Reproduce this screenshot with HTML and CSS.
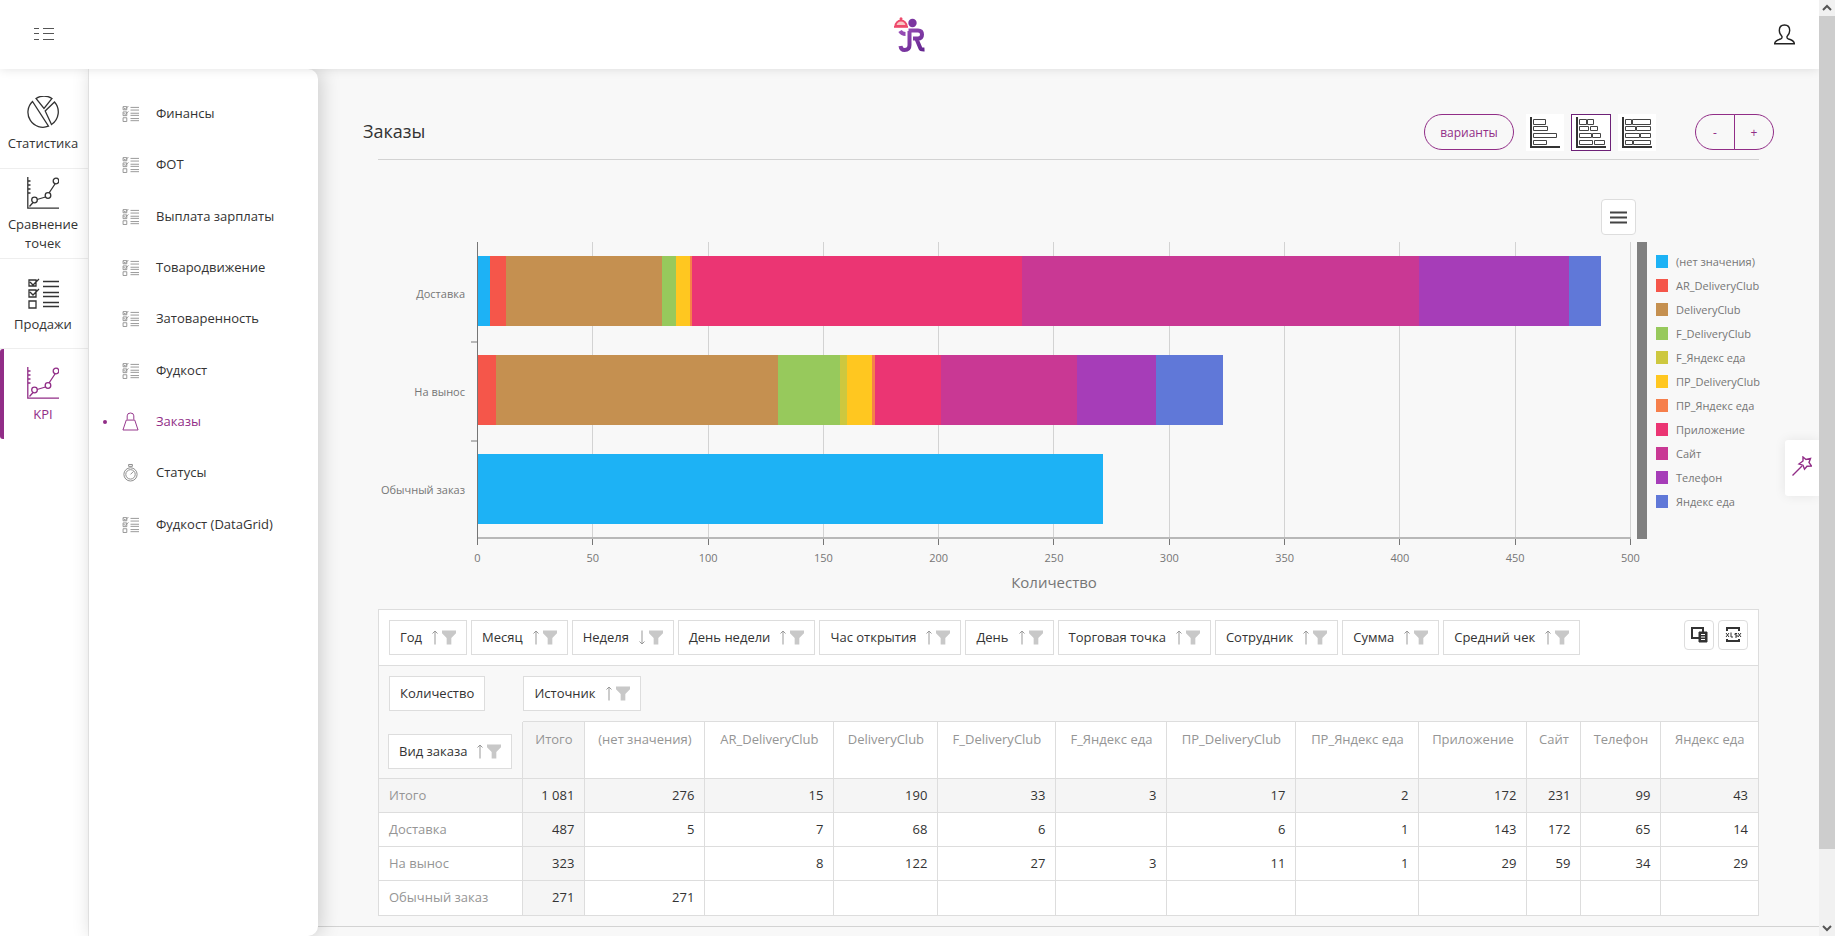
FILE: index.html
```html
<!DOCTYPE html>
<html lang="ru">
<head>
<meta charset="utf-8">
<title>Заказы</title>
<link rel="stylesheet" href="styles.css">
</head>
<body>
<svg class="sprite" aria-hidden="true">
  <symbol id="i-list" viewBox="0 0 32 32"><path d="M2 3h7v6H2zM2 13h7v7H2zM2 24h7v7H2zM3 5l3 3 6-6M3 15l3 3 6-6M16 4.500h16M16 9.500h16M16 15.500h16M16 19.500h16M16 25.500h16M16 29.500h16"/></symbol>
  <symbol id="i-trend" viewBox="0 0 32 32"><path d="M.8 0v31.200H32M1 4h2.500M1 8h2.500M1 12h2.500M1 16h2.500M2.500 29.500l3.500-4M10 22.500l8.500-2.500M22 16l6-9"/><circle cx="7.500" cy="23" r="2.800"/><circle cx="21" cy="18.500" r="2.800"/><circle cx="29" cy="4" r="2.800"/></symbol>
  <symbol id="i-pie" viewBox="0 0 32 32"><path d="M9 2.500a15 15 0 0 1 16 0L17 12.500zM5.500 5.500A15 15 0 0 0 21.500 30.200zM27.500 6A15 15 0 0 1 24.500 28.500L18.200 15z"/></symbol>
  <symbol id="i-weight" viewBox="0 0 18 20"><path d="M5.500 8V4Q5.500 1 9 1t3.500 3v4M4.500 8.500h9L17 19H1z"/></symbol>
  <symbol id="i-watch" viewBox="0 0 18 20"><circle cx="9" cy="12" r="7"/><circle cx="9" cy="12" r="5"/><path d="M9 12l3-3M7 1.500h4v2H7z"/></symbol>
  <symbol id="i-up" viewBox="0 0 6 15"><path d="M3 14.500V1M.5 3.500L3 1l2.500 2.500"/></symbol>
  <symbol id="i-down" viewBox="0 0 6 15"><path d="M3 .5V14M.5 11.500L3 14l2.500-2.500"/></symbol>
  <symbol id="i-funnel" viewBox="0 0 15 15"><path d="M0 0h15v3L10 8v7H5V8L0 3z"/></symbol>
</svg>

<div class="app">
  <header class="top">
    <button class="plain" aria-label="Меню"><svg class="burger" viewBox="0 0 20 13"><path d="M0 .5h5M9 .5h11M0 5.500h5M9 5.500h11M0 11.500h5M9 11.500h11"/></svg></button>
    <a class="logo" href="#" aria-label="Главная"><svg viewBox="0 0 32 36">
      <defs><linearGradient id="lg" x1="0" y1="0" x2="1" y2="1"><stop offset="0" stop-color="#9a4fb8"/><stop offset="1" stop-color="#63258f"/></linearGradient></defs>
      <path d="M1.500 9a5.500 5.500 0 0 1 11 0z" fill="#f9c6c4" stroke="#ee4a6c" stroke-width="2"/><path d="M0 9.800h14" stroke="#ee4a6c" stroke-width="2"/><circle cx="7" cy="1.800" r="1.500" fill="#ee4a6c"/>
      <circle cx="18.500" cy="6" r="4.200" fill="#7b35a0"/>
      <path d="M6 14q2 3 5.500 3M14.500 13.500h9.500q4 0 4 4t-4 4h-5M15.500 14v14q0 5-5 5Q7 33 6.500 29M22.500 22l4 9.500q.5 1.200 4 1" fill="none" stroke="url(#lg)" stroke-width="4"/>
    </svg></a>
    <button class="plain" aria-label="Профиль"><svg class="user" viewBox="0 0 21 21"><path d="M10.500 1C7 1 5.300 3 5.300 6.500q0 3.500 2.700 6v1q0 1-1.500 1.500-5.500 1.500-6 4.800h20q-.5-3.300-6-4.800-1.500-.5-1.500-1.500v-1q2.700-2.500 2.700-6C15.700 3 14 1 10.500 1z"/></svg></button>
  </header>

  <div class="body">
    <nav class="rail">
      <a href="#"><svg><use href="#i-pie"/></svg>Статистика</a>
      <a href="#" class="tight"><svg><use href="#i-trend"/></svg>Сравнение точек</a>
      <a href="#"><svg><use href="#i-list"/></svg>Продажи</a>
      <a href="#" class="on"><svg><use href="#i-trend"/></svg>KPI</a>
    </nav>
    <nav class="sub">
      <div class="items">
        <a href="#"><svg><use href="#i-list"/></svg>Финансы</a>
        <a href="#"><svg><use href="#i-list"/></svg>ФОТ</a>
        <a href="#"><svg><use href="#i-list"/></svg>Выплата зарплаты</a>
        <a href="#"><svg><use href="#i-list"/></svg>Товародвижение</a>
        <a href="#"><svg><use href="#i-list"/></svg>Затоваренность</a>
        <a href="#"><svg><use href="#i-list"/></svg>Фудкост</a>
        <a href="#" class="on"><svg class="big"><use href="#i-weight"/></svg>Заказы</a>
        <a href="#"><svg class="big"><use href="#i-watch"/></svg>Статусы</a>
        <a href="#"><svg><use href="#i-list"/></svg>Фудкост (DataGrid)</a>
      </div>
    </nav>

    <main class="main">
      <div class="head">
        <h1>Заказы</h1>
        <button class="pill">варианты</button>
        <div class="kinds">
          <button aria-label="Рядом"><svg viewBox="0 0 30 31"><path class="ax" d="M1 0v30h29"/><path d="M3.500 2.500h12v5h-12zM3.500 9.500h14v4h-14zM3.500 16.500h23v4h-23zM3.500 23.500h13v4h-13z"/></svg></button>
          <button class="on" aria-label="С накоплением"><svg viewBox="0 0 30 31"><path class="ax" d="M1 0v30h29"/><path d="M3.500 2.500h7v5h-7zM11.500 2.500h6v5h-6zM3.500 9.500h9v4h-9zM14.500 9.500h7v4h-7zM3.500 16.500h12v4h-12zM16.500 16.500h8v4h-8zM3.500 23.500h13v4h-13zM18.500 23.500h10v4h-10z"/></svg></button>
          <button aria-label="Доли"><svg viewBox="0 0 30 31"><path class="ax" d="M1 0v30h29"/><path d="M3.500 2.500h6v5h-6zM10.500 2.500h18v5h-18zM3.500 9.500h10v4h-10zM14.500 9.500h14v4h-14zM3.500 16.500h14v4h-14zM18.500 16.500h10v4h-10zM3.500 23.500h7v4h-7zM11.500 23.500h17v4h-17z"/></svg></button>
        </div>
        <div class="pair"><button>-</button><button>+</button></div>
      </div>

      <section class="chart">
        <div class="export"><button aria-label="Экспорт"><svg viewBox="0 0 17 13"><path d="M0 1.500h17M0 6.500h17M0 11.500h17"/></svg></button></div>
        <div class="cats"><span>Доставка</span><span>На вынос</span><span>Обычный заказ</span></div>
        <div class="plot">
          <div class="grid"><i></i><i></i><i></i><i></i><i></i><i></i><i></i><i></i><i></i><i></i></div>
          <div class="row"><b class="c1" style="width:1%"></b><b class="c2" style="width:1.4%"></b><b class="c3" style="width:13.6%"></b><b class="c4" style="width:1.2%"></b><b class="c6" style="width:1.2%"></b><b class="c7" style="width:.2%"></b><b class="c8" style="width:28.6%"></b><b class="c9" style="width:34.4%"></b><b class="ca" style="width:13%"></b><b class="cb" style="width:2.8%"></b></div>
          <div class="row"><b class="c2" style="width:1.6%"></b><b class="c3" style="width:24.4%"></b><b class="c4" style="width:5.4%"></b><b class="c5" style="width:.6%"></b><b class="c6" style="width:2.2%"></b><b class="c7" style="width:.2%"></b><b class="c8" style="width:5.8%"></b><b class="c9" style="width:11.8%"></b><b class="ca" style="width:6.8%"></b><b class="cb" style="width:5.8%"></b></div>
          <div class="row"><b class="c1" style="width:54.2%"></b></div>
        </div>
        <div class="roll"></div>
        <ul class="legend">
          <li><b class="c1"></b>(нет значения)</li><li><b class="c2"></b>AR_DeliveryClub</li><li><b class="c3"></b>DeliveryClub</li><li><b class="c4"></b>F_DeliveryClub</li><li><b class="c5"></b>F_Яндекс еда</li><li><b class="c6"></b>ПР_DeliveryClub</li><li><b class="c7"></b>ПР_Яндекс еда</li><li><b class="c8"></b>Приложение</li><li><b class="c9"></b>Сайт</li><li><b class="ca"></b>Телефон</li><li><b class="cb"></b>Яндекс еда</li>
        </ul>
        <div class="scale"><span>0</span><span>50</span><span>100</span><span>150</span><span>200</span><span>250</span><span>300</span><span>350</span><span>400</span><span>450</span><span>500</span></div>
        <div class="axis-name">Количество</div>
      </section>

      <section class="pivot">
        <div class="fields">
          <button class="f">Год<svg class="s"><use href="#i-up"/></svg><svg class="n"><use href="#i-funnel"/></svg></button>
          <button class="f">Месяц<svg class="s"><use href="#i-up"/></svg><svg class="n"><use href="#i-funnel"/></svg></button>
          <button class="f">Неделя<svg class="s"><use href="#i-down"/></svg><svg class="n"><use href="#i-funnel"/></svg></button>
          <button class="f">День недели<svg class="s"><use href="#i-up"/></svg><svg class="n"><use href="#i-funnel"/></svg></button>
          <button class="f">Час открытия<svg class="s"><use href="#i-up"/></svg><svg class="n"><use href="#i-funnel"/></svg></button>
          <button class="f">День<svg class="s"><use href="#i-up"/></svg><svg class="n"><use href="#i-funnel"/></svg></button>
          <button class="f">Торговая точка<svg class="s"><use href="#i-up"/></svg><svg class="n"><use href="#i-funnel"/></svg></button>
          <button class="f">Сотрудник<svg class="s"><use href="#i-up"/></svg><svg class="n"><use href="#i-funnel"/></svg></button>
          <button class="f">Сумма<svg class="s"><use href="#i-up"/></svg><svg class="n"><use href="#i-funnel"/></svg></button>
          <button class="f">Средний чек<svg class="s"><use href="#i-up"/></svg><svg class="n"><use href="#i-funnel"/></svg></button>
          <div class="tools">
            <button aria-label="Выбор полей"><svg viewBox="0 0 18 18"><path d="M2 2h11v10H2z" fill="none" stroke="#333" stroke-width="2"/><path d="M9 6h8v10H9z" fill="#333"/><path d="M11 8.500h4M11 11h4M11 13.500h4" stroke="#fff"/></svg></button>
            <button aria-label="Экспорт в xlsx"><svg viewBox="0 0 18 18"><path d="M3 5V2h12v3M3 13v2h12v-2" fill="none" stroke="#333" stroke-width="2"/><path d="M2 7l3 4M5 7l-3 4M7 6.500V11h2M13 7.500h-2V9h2v2h-2M14 7l3 4M17 7l-3 4" fill="none" stroke="#333"/></svg></button>
          </div>
        </div>
        <table>
          <colgroup><col><col class="w62"><col class="w120"><col class="w129"><col class="w104"><col class="w118"><col class="w111"><col class="w129"><col class="w123"><col class="w108"><col class="w54"><col class="w80"><col class="w97"></colgroup>
          <thead>
            <tr class="drop"><td><button class="f">Количество</button></td><td colspan="12"><button class="f">Источник<svg class="s"><use href="#i-up"/></svg><svg class="n"><use href="#i-funnel"/></svg></button></td></tr>
            <tr class="cols"><td class="corner"><button class="f">Вид заказа<svg class="s"><use href="#i-up"/></svg><svg class="n"><use href="#i-funnel"/></svg></button></td><th class="t">Итого</th><th>(нет значения)</th><th>AR_DeliveryClub</th><th>DeliveryClub</th><th>F_DeliveryClub</th><th>F_Яндекс еда</th><th>ПР_DeliveryClub</th><th>ПР_Яндекс еда</th><th>Приложение</th><th>Сайт</th><th>Телефон</th><th>Яндекс еда</th></tr>
          </thead>
          <tbody>
            <tr class="total"><th>Итого</th><td class="t">1 081</td><td>276</td><td>15</td><td>190</td><td>33</td><td>3</td><td>17</td><td>2</td><td>172</td><td>231</td><td>99</td><td>43</td></tr>
            <tr><th>Доставка</th><td class="t">487</td><td>5</td><td>7</td><td>68</td><td>6</td><td></td><td>6</td><td>1</td><td>143</td><td>172</td><td>65</td><td>14</td></tr>
            <tr><th>На вынос</th><td class="t">323</td><td></td><td>8</td><td>122</td><td>27</td><td>3</td><td>11</td><td>1</td><td>29</td><td>59</td><td>34</td><td>29</td></tr>
            <tr><th>Обычный заказ</th><td class="t">271</td><td>271</td><td></td><td></td><td></td><td></td><td></td><td></td><td></td><td></td><td></td><td></td></tr>
          </tbody>
        </table>
      </section>
      <div class="foot"></div>
    </main>
  </div>
  <button class="wand" aria-label="Настройки"><svg viewBox="0 0 20 20"><path d="M.5 19.500L10 10M11 1l3 2.500 4.500-1L17 6.500l2.500 3.500-4.500.2-2.500 3-1.500-4-4-1.200L11 5z"/></svg></button>
  <div class="bar"><svg viewBox="0 0 16 16"><path d="M4 10l4-4 4 4"/></svg><div class="thumb"></div><svg class="end" viewBox="0 0 16 16"><path d="M4 6l4 4 4-4"/></svg></div>
</div>
</body>
</html>
```
FILE: styles.css
```css
* { box-sizing: border-box; }
body { margin: 0; font: 13px/19px "Open Sans", "Noto Sans", sans-serif; color: #333; background: #f8f8f8; overflow: hidden; }
button { font: inherit; color: inherit; padding: 0; margin: 0; background: #fff; border: 0; }
a { color: inherit; text-decoration: none; }
svg { fill: none; stroke: currentColor; flex: none; }
.sprite { position: absolute; width: 0; height: 0; }

.app { display: grid; grid-template: 69px 1fr / 1fr 16px; height: 100vh; position: relative; }
.top { display: grid; grid-template-columns: 1fr auto 1fr; align-items: center; padding: 0 24px; background: #fff; box-shadow: 0 0 10px rgba(0,0,0,.12); z-index: 2; }
.plain { background: none; display: flex; justify-self: start; padding-left: 10px; }
.plain:last-child { justify-self: end; }
.burger { width: 20px; height: 13px; stroke: #555; }
.user { width: 21px; height: 21px; stroke: #222; stroke-width: 1.4; }
.logo { display: flex; }
.logo svg { width: 32px; height: 36px; stroke: none; }

.body { display: flex; min-height: 0; overflow: hidden; }
.rail { width: 89px; background: #fff; border-right: 1px solid #eee; text-align: center; flex: none; }
.rail a { display: flex; flex-direction: column; align-items: center; height: 90px; padding: 18px 6px 0 4px; gap: 6px; border-bottom: 1px solid #eee; }
.rail a:first-child { height: 100px; padding-top: 27px; }
.rail a.tight { padding-top: 8px; }
.rail a.on { color: #912d87; border-bottom: 0; border-left: 4px solid #912d87; border-radius: 3px; padding: 18px 6px 0 0; }
.rail svg { width: 32px; height: 32px; stroke-width: 1.3; }
.sub { width: 229px; background: #fff; border-radius: 0 10px 10px 0; box-shadow: 3px 0 20px rgba(0,0,0,.18); padding-top: 19px; flex: none; z-index: 1; }
.items { display: grid; grid-template-rows: repeat(9, 1fr); height: 462px; }
.items a { display: flex; align-items: center; gap: 17px; padding-left: 33px; position: relative; }
.sub svg { width: 17px; height: 17px; stroke: #888; stroke-width: 1.6; }
.sub svg.big { width: 17px; height: 19px; stroke-width: 1; }
.sub .on { color: #912d87; }
.sub .on svg { stroke: #912d87; }
.sub .on::before { content: ""; position: absolute; left: 14px; width: 4px; height: 4px; border-radius: 50%; background: #912d87; }

.main { flex: 1; min-width: 0; padding-top: 45px; }
.head { display: flex; height: 46px; margin: 0 60px; align-items: flex-start; border-bottom: 1px solid #d3d3d3; }
.head h1 { margin: 5px auto 0 -15px; font-size: 18px; line-height: 24px; font-weight: 400; }
.pill { height: 36px; width: 90px; border: 1px solid #912d87; border-radius: 18px; background: none; color: #912d87; font-size: 12px; }
.kinds { display: flex; gap: 7px; margin: 0 39px 0 12px; }
.kinds button { width: 38px; height: 37px; display: grid; place-items: center; }
.kinds .on { width: 40px; border: 1px solid #6d2177; }
.kinds svg { width: 30px; height: 31px; stroke: #444; }
.kinds .ax { stroke-width: 2; stroke: #333; }
.pair { display: flex; margin-right: -15px; }
.pair button { width: 40px; height: 36px; border: 1px solid #912d87; background: none; color: #912d87; font-size: 12px; border-radius: 18px 0 0 18px; }
.pair button + button { margin-left: -1px; border-radius: 0 18px 18px 0; }

.chart { display: grid; grid-template: 82px 297px 38px 32px / 99px 1fr 16px 112px; margin: 0 60px; color: #767676; font-size: 11px; }
.export { grid-column: 1 / 4; justify-self: end; padding-top: 39px; margin-right: 11px; }
.export button { width: 35px; height: 36px; border: 1px solid #ddd; border-radius: 4px; display: grid; place-items: center; }
.export svg { width: 17px; height: 13px; stroke: #444; stroke-width: 2; }
.cats { grid-column: 1; display: grid; grid-template-rows: repeat(3, 1fr); align-items: center; text-align: right; padding-right: 12px; padding-top: 2px; }
.plot { border-left: 1px solid #767676; box-shadow: inset 0 -2px #b8b8b8; position: relative; display: grid; grid-template-rows: repeat(3, 1fr); }
.grid { position: absolute; inset: 0 0 2px; display: flex; }
.grid i { flex: 1; border-right: 1px solid #d3d3d3; }
.row { position: relative; display: flex; padding: 14px 0 15px; }
.row + .row::before { content: ""; position: absolute; left: -7px; top: 0; width: 6px; height: 2px; background: #b8b8b8; }
.c1 { background: #1db2f5; } .c2 { background: #f5564a; } .c3 { background: #c59050; } .c4 { background: #97c95c; } .c5 { background: #cdc83f; } .c6 { background: #ffc720; } .c7 { background: #f67f4b; } .c8 { background: #eb3573; } .c9 { background: #c93894; } .ca { background: #a63db8; } .cb { background: #6078d8; }
.roll { background: #808080; margin-left: 6px; }
.legend { list-style: none; margin: 0 -20px 0 9px; padding: 7px 0 0; }
.legend li { display: flex; align-items: center; gap: 8px; height: 24px; white-space: nowrap; }
.legend b { width: 12px; height: 13px; }
.scale { grid-column: 2; display: flex; justify-content: space-between; }
.scale span { width: 1px; display: flex; flex-direction: column; align-items: center; gap: 3px; }
.scale span::before { content: ""; width: 1px; height: 6px; background: #767676; flex: none; }
.axis-name { grid-column: 2; text-align: center; font-size: 15px; line-height: 10px; }

.pivot { margin: 0 60px; border: 1px solid #ddd; }
.fields { display: flex; gap: 4px; padding: 10px; background: #fff; }
.f { display: inline-flex; align-items: center; height: 35px; padding: 0 10px; border: 1px solid #ddd; white-space: nowrap; }
.s { width: 6px; height: 15px; margin-left: 10px; stroke: #999; }
.n { width: 14px; height: 15px; margin-left: 4px; fill: #c8c8c8; stroke: none; }
.tools { display: flex; gap: 4px; margin-left: auto; }
.tools button { width: 30px; height: 30px; border: 1px solid #ddd; border-radius: 4px; display: grid; place-items: center; }
.tools svg { width: 18px; height: 18px; }
table { width: 100%; border-collapse: collapse; table-layout: fixed; }
td, th { height: 34px; padding: 0 10px; border: 1px solid #ddd; background: #fff; font-weight: 400; text-align: right; }
th { color: #959595; text-align: left; }
tr > :first-child { border-left: 0; }
tr > :last-child { border-right: 0; }
tbody tr:last-child > * { border-bottom: 0; }
.drop td { height: 56px; background: #f8f8f8; border-color: #ddd transparent transparent; text-align: left; padding: 0 0 0 10px; }
.drop td + td { padding-left: 0; border-bottom-color: #ddd; }
.cols th { height: 57px; vertical-align: top; text-align: center; padding: 8px 0 0; white-space: nowrap; }
.cols .corner { background: #f8f8f8; text-align: left; padding: 2px 0 0 9px; border-top: 0; }
.total > *, .total > *, th.t, td.t { background: #f5f5f5; }
.w62 { width: 62px; } .w120 { width: 120px; } .w129 { width: 129px; } .w104 { width: 104px; } .w118 { width: 118px; } .w111 { width: 111px; } .w123 { width: 123px; } .w108 { width: 108px; } .w54 { width: 54px; } .w80 { width: 80px; } .w97 { width: 97px; }
.foot { margin-top: 10px; border-top: 1px solid #d3d3d3; }

.wand { position: absolute; right: 16px; top: 440px; width: 34px; height: 56px; padding-bottom: 4px; border-radius: 3px 0 0 3px; box-shadow: 0 0 12px rgba(0,0,0,.08); display: grid; place-items: center; }
.wand svg { width: 20px; height: 20px; stroke: #912d87; stroke-width: 1.4; }
.bar { grid-area: 1 / 2 / 3 / 3; background: #f1f1f1; display: flex; flex-direction: column; z-index: 3; }
.bar svg { width: 16px; height: 16px; stroke: #555; stroke-width: 2; }
.bar .thumb { height: 89%; background: #cdcdcd; }
.bar .end { margin-top: auto; }
```
